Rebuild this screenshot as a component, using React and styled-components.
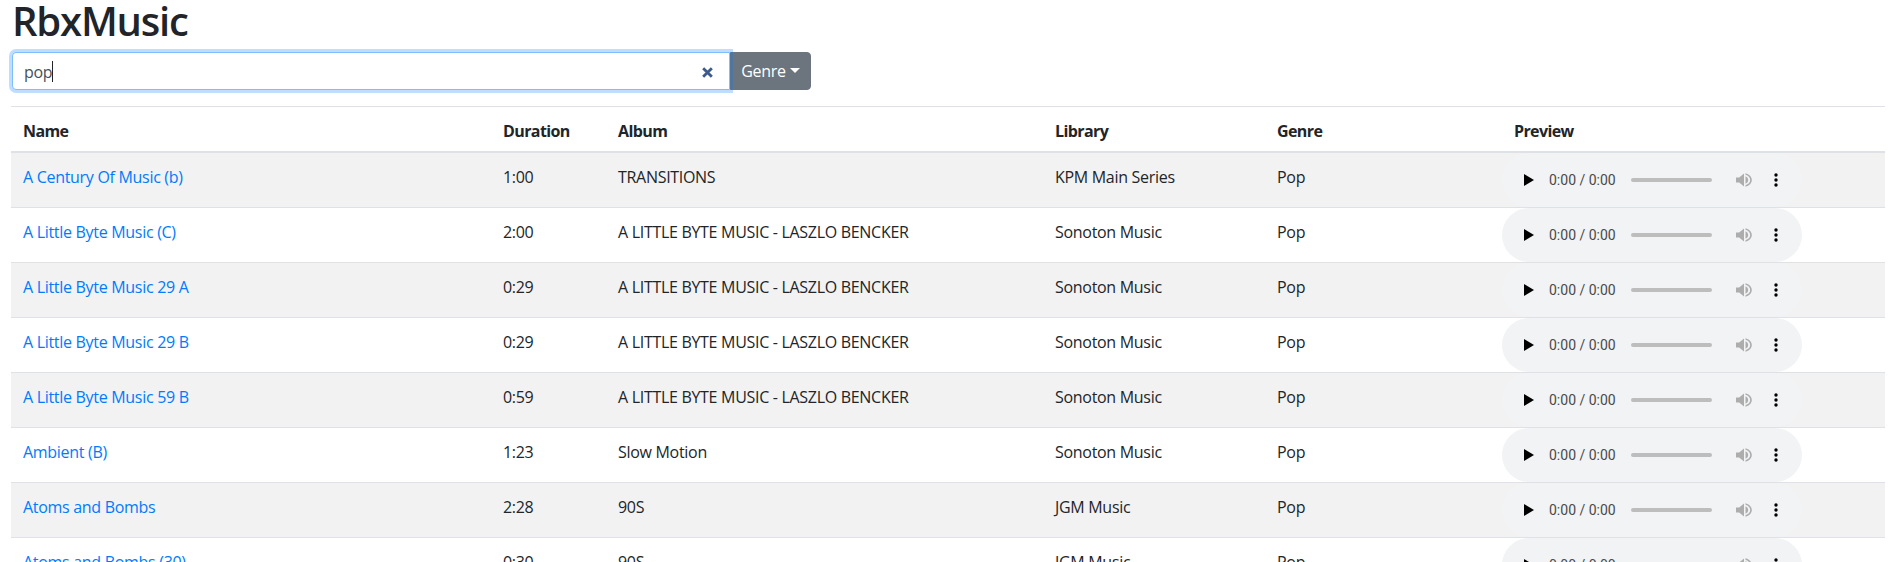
import React from "react"
import styled, { createGlobalStyle } from "styled-components"

const tracks = [
  ["A Century Of Music (b)", "1:00", "TRANSITIONS", "KPM Main Series"],
  ["A Little Byte Music (C)", "2:00", "A LITTLE BYTE MUSIC - LASZLO BENCKER", "Sonoton Music"],
  ["A Little Byte Music 29 A", "0:29", "A LITTLE BYTE MUSIC - LASZLO BENCKER", "Sonoton Music"],
  ["A Little Byte Music 29 B", "0:29", "A LITTLE BYTE MUSIC - LASZLO BENCKER", "Sonoton Music"],
  ["A Little Byte Music 59 B", "0:59", "A LITTLE BYTE MUSIC - LASZLO BENCKER", "Sonoton Music"],
  ["Ambient (B)", "1:23", "Slow Motion", "Sonoton Music"],
  ["Atoms and Bombs", "2:28", "90S", "JGM Music"],
  ["Atoms and Bombs (30)", "0:30", "90S", "JGM Music"],
]

const AudioPlayer = () => (
  <Player>
    <PlayIcon viewBox="0 0 10 12"><path d="M0 0l10 6-10 6z" /></PlayIcon>
    <Time>0:00 / 0:00</Time>
    <Seek />
    <VolumeIcon viewBox="0 0 16 16">
      <path d="M0 5.500h3.200L8 1.500v13l-4.800-4H0z" />
      <path d="M9.500 4.200c1.700.8 2.700 2.200 2.700 3.800s-1 3-2.700 3.800z" />
      <path d="M9.500 1.200c3.700 1 6.300 3.500 6.300 6.800s-2.600 5.800-6.300 6.800v-1.600c2.800-.9 4.700-2.800 4.700-5.200s-1.900-4.300-4.700-5.200z" />
    </VolumeIcon>
    <MoreIcon viewBox="0 0 4 14">
      <circle cx="2" cy="2" r="1.700" />
      <circle cx="2" cy="7" r="1.700" />
      <circle cx="2" cy="12" r="1.700" />
    </MoreIcon>
  </Player>
)

export default () => (
  <Page>
    <GlobalStyle />
    <Title>RbxMusic</Title>
    <SearchBar>
      <SearchField>
        <SearchText>pop</SearchText>
        <Caret />
        <ClearIcon viewBox="0 0 12 12">
          <path d="M2 2l8 8M10 2l-8 8" />
        </ClearIcon>
      </SearchField>
      <GenreButton>Genre<ButtonCaret /></GenreButton>
    </SearchBar>
    <Table>
      <thead>
        <tr>
          <Th $width={480}>Name</Th>
          <Th $width={115}>Duration</Th>
          <Th $width={437}>Album</Th>
          <Th $width={222}>Library</Th>
          <Th $width={237}>Genre</Th>
          <Th>Preview</Th>
        </tr>
      </thead>
      <tbody>
        {tracks.map(([name, duration, album, library]) => (
          <Row key={name}>
            <Td><TrackLink href="#">{name}</TrackLink></Td>
            <Td>{duration}</Td>
            <Td>{album}</Td>
            <Td>{library}</Td>
            <Td>Pop</Td>
            <PlayerCell><AudioPlayer /></PlayerCell>
          </Row>
        ))}
      </tbody>
    </Table>
  </Page>
)

const GlobalStyle = createGlobalStyle`
  html, body {
    margin: 0;
    height: 100%;
    overflow: hidden;
    background: #fff;
  }
  body {
    font-family: "Open Sans", "Liberation Sans", sans-serif;
    font-size: 16px;
    line-height: 24px;
    letter-spacing: -0.3px;
    color: #212529;
  }
`

const Page = styled.div`
  padding: 0 9px 0 11px;
`

const Title = styled.h1`
  margin: 0 0 11px 1px;
  font-size: 40px;
  font-weight: 600;
  line-height: 41px;
  letter-spacing: -1.2px;
`

const SearchBar = styled.div`
  display: flex;
  margin: 0 0 16px 1px;
`

const SearchField = styled.div`
  position: relative;
  z-index: 1;
  display: flex;
  align-items: center;
  box-sizing: border-box;
  width: 718px;
  height: 38px;
  padding: 2px 11px 0;
  background: #fff;
  border: 1px solid #80bdff;
  border-radius: 4px 0 0 4px;
  box-shadow: 0 0 0 3px rgba(0, 123, 255, 0.25);
`

const SearchText = styled.span`
  color: #495057;
`

const Caret = styled.span`
  width: 1px;
  height: 21px;
  margin-top: -2px;
  background: #212529;
`

const ClearIcon = styled.svg`
  position: absolute;
  right: 15px;
  top: 13px;
  width: 13px;
  height: 13px;
  fill: none;
  stroke: #3b5a8f;
  stroke-width: 2.6;
`

const GenreButton = styled.button`
  display: flex;
  align-items: center;
  justify-content: center;
  width: 81px;
  height: 38px;
  padding: 0;
  color: #fff;
  font: inherit;
  letter-spacing: inherit;
  background: #6c757d;
  border: 1px solid #6c757d;
  border-radius: 0 4px 4px 0;
`

const ButtonCaret = styled.span`
  margin-left: 4px;
  margin-top: -2px;
  border-top: 5px solid #fff;
  border-left: 5px solid transparent;
  border-right: 5px solid transparent;
`

const Table = styled.table`
  width: 100%;
  table-layout: fixed;
  border-collapse: collapse;
`

const Th = styled.th`
  box-sizing: border-box;
  width: ${p => (p.$width ? `${p.$width}px` : "auto")};
  padding: 12px 12px 8px;
  font-weight: 700;
  letter-spacing: -0.6px;
  text-align: left;
  border-top: 1px solid #dee2e6;
  border-bottom: 2px solid #dee2e6;
`

const Row = styled.tr`
  &:nth-child(odd) {
    background: #f2f2f2;
  }
`

const Td = styled.td`
  padding: 12px 12px 13px;
  vertical-align: top;
  border-bottom: 1px solid #dee2e6;
`

const PlayerCell = styled.td`
  padding: 0;
  vertical-align: top;
  border-bottom: 1px solid #dee2e6;
`

const Player = styled.div`
  display: flex;
  align-items: center;
  box-sizing: border-box;
  width: 300px;
  height: 54px;
  padding-left: 22px;
  background: #f1f3f4;
  border-radius: 27px;
`

const PlayIcon = styled.svg`
  width: 10px;
  height: 12px;
  fill: #000;
`

const Time = styled.span`
  margin-left: 15px;
  font-family: Roboto, "Liberation Sans", sans-serif;
  font-size: 14px;
  letter-spacing: 0;
  color: #4a4a4a;
`

const Seek = styled.div`
  width: 81px;
  height: 4px;
  margin-left: 15px;
  background: #bdbdbd;
  border-radius: 2px;
`

const VolumeIcon = styled.svg`
  width: 16px;
  height: 16px;
  margin-left: 24px;
  fill: #adadad;
`

const MoreIcon = styled.svg`
  width: 4px;
  height: 14px;
  margin-left: 22px;
  fill: #000;
`

const TrackLink = styled.a`
  color: #007bff;
  text-decoration: none;
`
